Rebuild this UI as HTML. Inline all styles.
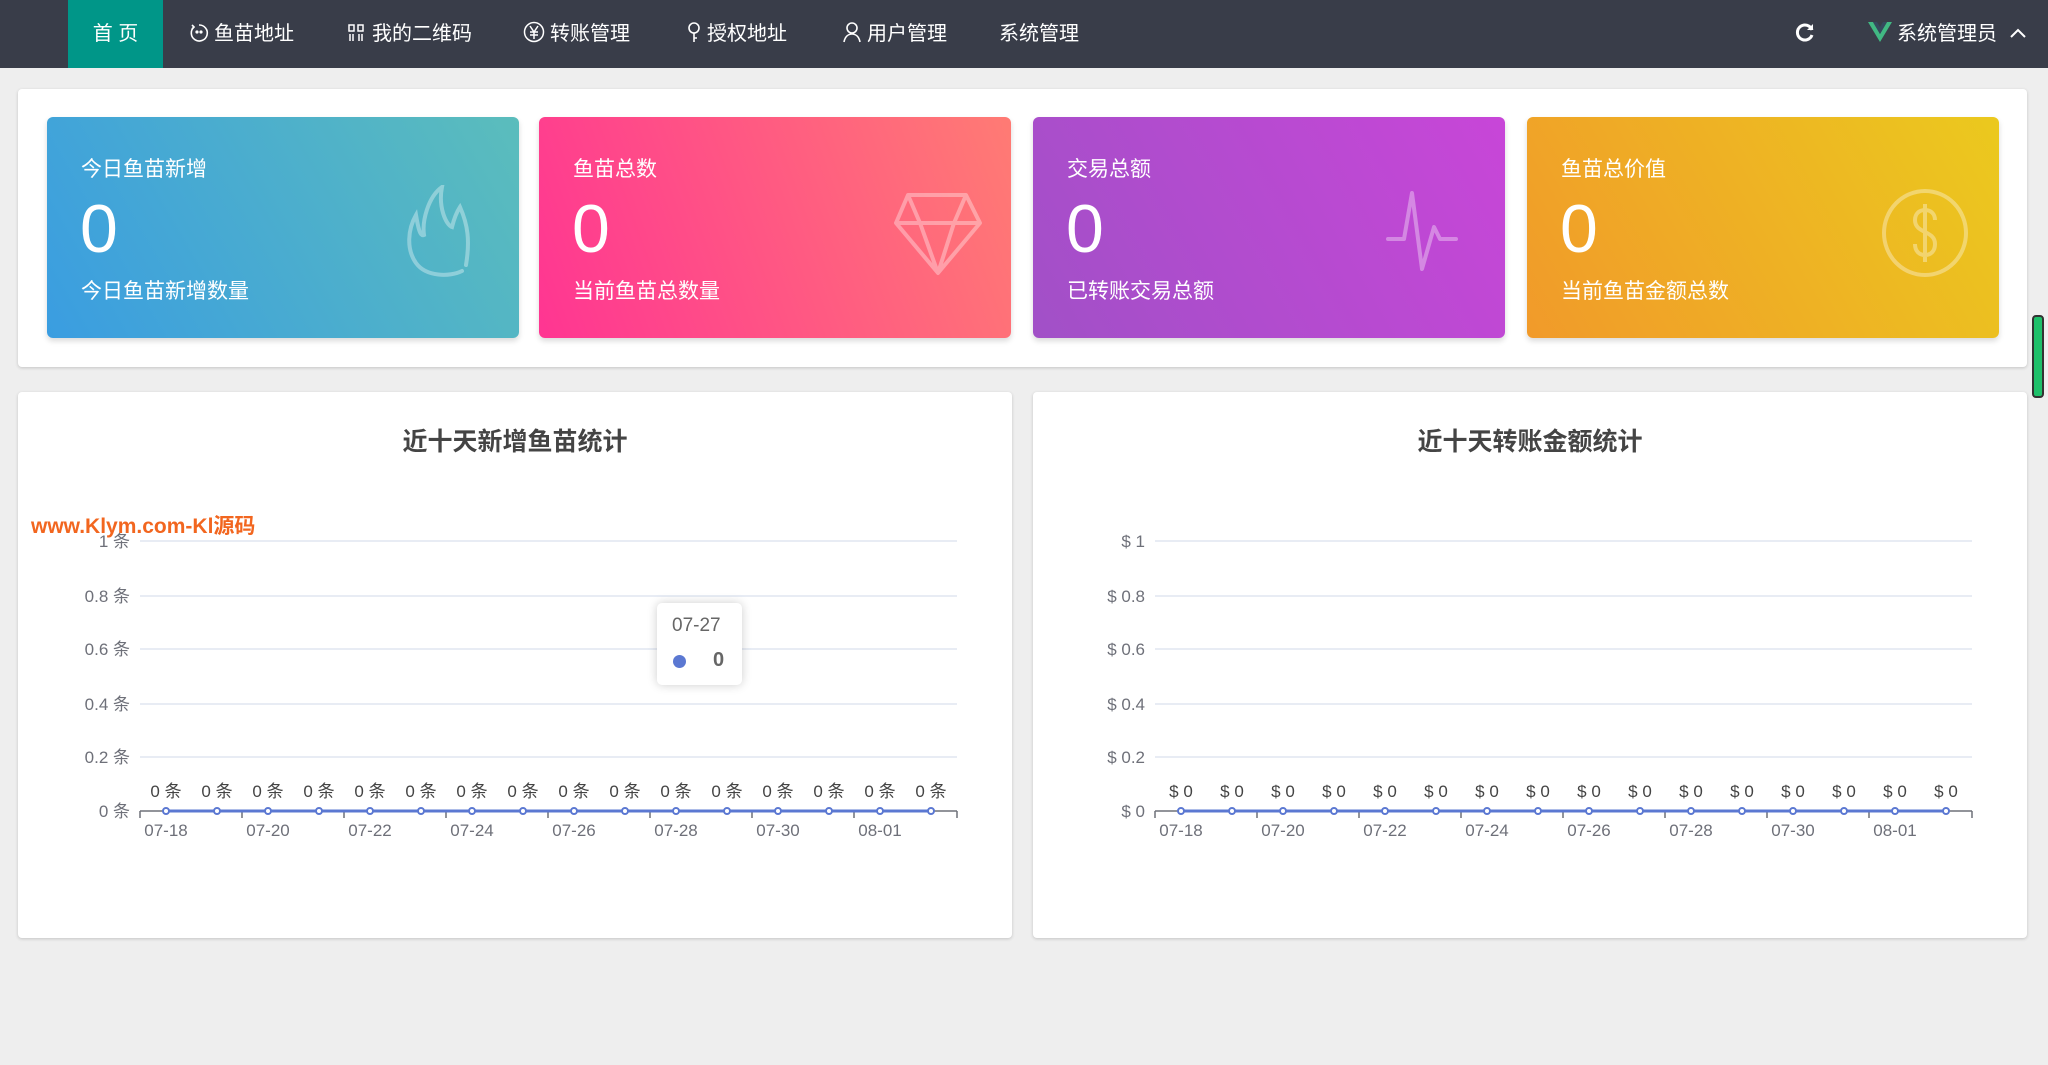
<!DOCTYPE html>
<html><head><meta charset="utf-8">
<style>
*{margin:0;padding:0;box-sizing:border-box}
body{width:2048px;height:1065px;background:#eeeeee;font-family:"Liberation Sans","Noto Sans CJK SC",sans-serif;position:relative;overflow:hidden}
.nav{position:absolute;left:0;top:0;width:2048px;height:68px;background:#393d49}
.nav .it{position:absolute;top:0;height:68px;line-height:68px;color:#fff;font-size:20px;white-space:nowrap}
.nav .act{left:68px;width:95px;background:#009688;text-align:center}
.nav svg{vertical-align:-3px;margin-right:5px}
.panel{position:absolute;background:#fff;border-radius:4px;box-shadow:0 1px 3px rgba(0,0,0,.18)}
.card{position:absolute;top:117px;width:472px;height:221px;border-radius:6px;color:#fff;box-shadow:0 3px 6px rgba(0,0,0,.15)}
.card .t{position:absolute;left:34px;top:36px;font-size:21px}
.card .n{position:absolute;left:33px;top:72px;font-size:68px;font-weight:300;line-height:80px}
.card .s{position:absolute;left:34px;top:158px;font-size:21px}
.card svg{position:absolute}
.ct{position:absolute;top:422px;font-size:25px;font-weight:bold;color:#444;text-align:center;width:994px}
.wm{position:absolute;left:31px;top:510px;font-size:21px;font-weight:bold;color:#f2661f}
</style></head><body>
<div class="nav">
 <div class="it act">首 页</div>
 <div class="it" style="left:189px"><svg width="20" height="20" viewBox="0 0 20 20" fill="none" stroke="#fff" stroke-width="1.6"><path d="M5 4A8 8 0 1 0 10 2"/><path d="M3 2l2 2-2 2"/><circle cx="8" cy="9" r=".8" fill="#fff"/><circle cx="12" cy="9" r=".8" fill="#fff"/></svg>鱼苗地址</div>
 <div class="it" style="left:347px"><svg width="20" height="20" viewBox="0 0 20 20" fill="none" stroke="#fff" stroke-width="1.5"><rect x="2" y="2" width="5" height="6"/><rect x="11" y="2" width="5" height="6"/><path d="M3 11v7M6 11v7M12 11v7M15 11v7"/></svg>我的二维码</div>
 <div class="it" style="left:523px"><svg width="22" height="22" viewBox="0 0 22 22" fill="none" stroke="#fff" stroke-width="1.5"><circle cx="11" cy="11" r="9.5"/><path d="M7 5l4 6 4-6M11 11v7M7 11h8M7 14h8"/></svg>转账管理</div>
 <div class="it" style="left:686px"><svg width="16" height="22" viewBox="0 0 16 22" fill="none" stroke="#fff" stroke-width="1.6"><circle cx="8" cy="7" r="5"/><path d="M8 12v9M8 17h3"/></svg>授权地址</div>
 <div class="it" style="left:842px"><svg width="20" height="22" viewBox="0 0 20 22" fill="none" stroke="#fff" stroke-width="1.6"><circle cx="10" cy="7" r="5"/><path d="M2 21c1-5 4-8 8-8s7 3 8 8"/></svg>用户管理</div>
 <div class="it" style="left:999px">系统管理</div>
 <div class="it" style="left:1794px"><svg width="22" height="22" viewBox="0 0 22 22" fill="none" stroke="#fff" stroke-width="3"><path d="M18 9A7.5 7.5 0 1 0 18 14"/><path d="M19 3v6h-6z" fill="#fff" stroke="none"/></svg></div>
 <div class="it" style="left:1868px"><svg width="24" height="22" viewBox="0 0 24 22"><path d="M0 1h5l7 12 7-12h5L12 21z" fill="#41b883"/><path d="M5 1h4l3 5 3-5h4l-7 12z" fill="#35495e"/></svg>系统管理员 <svg width="18" height="12" viewBox="0 0 18 12" fill="none" stroke="#fff" stroke-width="2" style="margin-left:6px;vertical-align:1px"><path d="M2 10l7-7 7 7"/></svg></div>
</div>

<div class="panel" style="left:18px;top:89px;width:2009px;height:278px"></div>
<div class="card" style="left:47px;background:linear-gradient(60deg,#3a9de1,#5bbdbc)">
 <div class="t">今日鱼苗新增</div><div class="n">0</div><div class="s">今日鱼苗新增数量</div>
 <svg style="left:355px;top:68px" width="82" height="96" viewBox="0 0 82 96" fill="none" stroke="rgba(255,255,255,.35)" stroke-width="4" stroke-linecap="round"><path d="M60 86c-12 6-36 6-46-8C4 64 6 44 14 30c2 12 4 22 8 20C20 36 26 12 40 2c-4 20 4 38 10 40 2-8 4-14 8-20 8 18 10 34 6 58"/></svg>
</div>
<div class="card" style="left:539px;background:linear-gradient(70deg,#ff3592,#ff7b74)">
 <div class="t">鱼苗总数</div><div class="n">0</div><div class="s">当前鱼苗总数量</div>
 <svg style="left:353px;top:75px" width="92" height="84" viewBox="0 0 92 84" fill="none" stroke="rgba(255,255,255,.35)" stroke-width="4" stroke-linejoin="round"><path d="M16 3h58l14 28-42 50L4 31zM4 31h84M16 3l12 28 18 50M74 3L62 31 46 81"/></svg>
</div>
<div class="card" style="left:1033px;background:linear-gradient(60deg,#a150c7,#c846d8)">
 <div class="t">交易总额</div><div class="n">0</div><div class="s">已转账交易总额</div>
 <svg style="left:353px;top:72px" width="90" height="82" viewBox="0 0 90 82" fill="none" stroke="rgba(255,255,255,.35)" stroke-width="4" stroke-linecap="round" stroke-linejoin="round"><path d="M2 50h16l8-46 10 76 12-42 6 12h16"/></svg>
</div>
<div class="card" style="left:1527px;background:linear-gradient(60deg,#f19a2a,#ebc91e)">
 <div class="t">鱼苗总价值</div><div class="n">0</div><div class="s">当前鱼苗金额总数</div>
 <svg style="left:354px;top:71px" width="88" height="90" viewBox="0 0 88 90" fill="none" stroke="rgba(255,255,255,.35)" stroke-width="4"><ellipse cx="44" cy="45" rx="41" ry="42"/><path d="M44 16v58M54 32c0-6-4-10-10-10s-10 4-10 10c0 14 20 10 20 24 0 7-4 11-10 11s-10-4-10-11"/></svg>
</div>
<div style="position:absolute;left:2032px;top:315px;width:12px;height:83px;border-radius:4px;background:#1ec06a;border:2px solid #333"></div>

<div class="panel" style="left:18px;top:392px;width:994px;height:546px"></div>
<div class="panel" style="left:1033px;top:392px;width:994px;height:546px"></div>
<div class="ct" style="left:18px">近十天新增鱼苗统计</div>
<div class="ct" style="left:1033px">近十天转账金额统计</div>

<svg style="position:absolute;left:0;top:0" width="2048" height="1065" font-family="Liberation Sans, Noto Sans CJK SC, sans-serif" font-size="17" fill="#6e7079">
 <g stroke="#e0e6f1" stroke-width="1.5">
  <path d="M140 541H957M140 596H957M140 649H957M140 704H957M140 757H957"/>
  <path d="M1155 541H1972M1155 596H1972M1155 649H1972M1155 704H1972M1155 757H1972"/>
 </g>
 <g stroke="#6e7079" stroke-width="1.5">
  <path d="M140 811H957M1155 811H1972"/>
  <path d="M140 811v7M242 811v7M344 811v7M446 811v7M548 811v7M650 811v7M752 811v7M854 811v7M957 811v7"/>
  <path d="M1155 811v7M1257 811v7M1359 811v7M1461 811v7M1563 811v7M1665 811v7M1767 811v7M1869 811v7M1972 811v7"/>
 </g>
 <g text-anchor="end">
  <text x="130" y="547">1 条</text><text x="130" y="602">0.8 条</text><text x="130" y="655">0.6 条</text><text x="130" y="710">0.4 条</text><text x="130" y="763">0.2 条</text><text x="130" y="817">0 条</text>
  <text x="1145" y="547">$ 1</text><text x="1145" y="602">$ 0.8</text><text x="1145" y="655">$ 0.6</text><text x="1145" y="710">$ 0.4</text><text x="1145" y="763">$ 0.2</text><text x="1145" y="817">$ 0</text>
 </g>
 <g text-anchor="middle">
  <text x="166" y="836">07-18</text><text x="268" y="836">07-20</text><text x="370" y="836">07-22</text><text x="472" y="836">07-24</text><text x="574" y="836">07-26</text><text x="676" y="836">07-28</text><text x="778" y="836">07-30</text><text x="880" y="836">08-01</text>
  <text x="1181" y="836">07-18</text><text x="1283" y="836">07-20</text><text x="1385" y="836">07-22</text><text x="1487" y="836">07-24</text><text x="1589" y="836">07-26</text><text x="1691" y="836">07-28</text><text x="1793" y="836">07-30</text><text x="1895" y="836">08-01</text>
 </g>
 <path d="M166 811H931M1181 811H1946" stroke="#5b78d2" stroke-width="3"/>
 <g text-anchor="middle" fill="#444">
  <text x="166" y="797">0 条</text><text x="217" y="797">0 条</text><text x="268" y="797">0 条</text><text x="319" y="797">0 条</text><text x="370" y="797">0 条</text><text x="421" y="797">0 条</text><text x="472" y="797">0 条</text><text x="523" y="797">0 条</text><text x="574" y="797">0 条</text><text x="625" y="797">0 条</text><text x="676" y="797">0 条</text><text x="727" y="797">0 条</text><text x="778" y="797">0 条</text><text x="829" y="797">0 条</text><text x="880" y="797">0 条</text><text x="931" y="797">0 条</text>
  <text x="1181" y="797">$ 0</text><text x="1232" y="797">$ 0</text><text x="1283" y="797">$ 0</text><text x="1334" y="797">$ 0</text><text x="1385" y="797">$ 0</text><text x="1436" y="797">$ 0</text><text x="1487" y="797">$ 0</text><text x="1538" y="797">$ 0</text><text x="1589" y="797">$ 0</text><text x="1640" y="797">$ 0</text><text x="1691" y="797">$ 0</text><text x="1742" y="797">$ 0</text><text x="1793" y="797">$ 0</text><text x="1844" y="797">$ 0</text><text x="1895" y="797">$ 0</text><text x="1946" y="797">$ 0</text>
 </g>
 <g fill="#fff" stroke="#5b78d2" stroke-width="2">
  <circle cx="166" cy="811" r="3"/><circle cx="217" cy="811" r="3"/><circle cx="268" cy="811" r="3"/><circle cx="319" cy="811" r="3"/><circle cx="370" cy="811" r="3"/><circle cx="421" cy="811" r="3"/><circle cx="472" cy="811" r="3"/><circle cx="523" cy="811" r="3"/><circle cx="574" cy="811" r="3"/><circle cx="625" cy="811" r="3"/><circle cx="676" cy="811" r="3"/><circle cx="727" cy="811" r="3"/><circle cx="778" cy="811" r="3"/><circle cx="829" cy="811" r="3"/><circle cx="880" cy="811" r="3"/><circle cx="931" cy="811" r="3"/>
  <circle cx="1181" cy="811" r="3"/><circle cx="1232" cy="811" r="3"/><circle cx="1283" cy="811" r="3"/><circle cx="1334" cy="811" r="3"/><circle cx="1385" cy="811" r="3"/><circle cx="1436" cy="811" r="3"/><circle cx="1487" cy="811" r="3"/><circle cx="1538" cy="811" r="3"/><circle cx="1589" cy="811" r="3"/><circle cx="1640" cy="811" r="3"/><circle cx="1691" cy="811" r="3"/><circle cx="1742" cy="811" r="3"/><circle cx="1793" cy="811" r="3"/><circle cx="1844" cy="811" r="3"/><circle cx="1895" cy="811" r="3"/><circle cx="1946" cy="811" r="3"/>
 </g>
</svg>
<div style="position:absolute;left:657px;top:603px;width:85px;height:82px;background:#fff;border-radius:5px;box-shadow:0 0 10px rgba(0,0,0,.2)">
 <div style="position:absolute;left:15px;top:12px;font-size:19px;color:#666">07-27</div>
 <div style="position:absolute;left:16px;top:52px;width:13px;height:13px;border-radius:50%;background:#5b78d2"></div>
 <div style="position:absolute;left:56px;top:46px;font-size:20px;font-weight:bold;color:#666">0</div>
</div>
<div class="wm">www.Klym.com-Kl源码</div>
</body></html>
